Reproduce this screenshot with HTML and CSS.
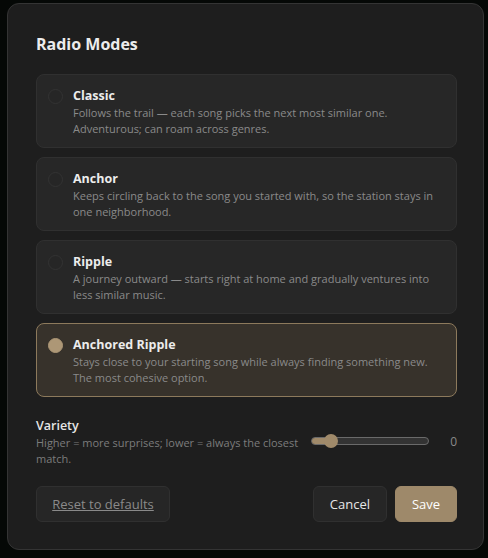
FILE: index.html
```html
<!DOCTYPE html>
<html lang="en">
<head>
  <meta charset="UTF-8" />
  <meta name="viewport" content="width=device-width, initial-scale=1.0"/>
  <title>Radio Modes</title>
  <link rel="stylesheet" href="styles.css">
</head>
<body>

  <div class="modal">
    <h1>Radio Modes</h1>

    <div class="modes">
      <label class="mode">
        <span class="radio"></span>
        <span class="mode-text">
          <strong>Classic</strong>
          <span class="desc">Follows the trail — each song picks the next most similar one. Adventurous; can roam across genres.</span>
        </span>
      </label>
      <label class="mode">
        <span class="radio"></span>
        <span class="mode-text">
          <strong>Anchor</strong>
          <span class="desc">Keeps circling back to the song you started with, so the station stays in one neighborhood.</span>
        </span>
      </label>
      <label class="mode">
        <span class="radio"></span>
        <span class="mode-text">
          <strong>Ripple</strong>
          <span class="desc">A journey outward — starts right at home and gradually ventures into less similar music.</span>
        </span>
      </label>
      <label class="mode selected">
        <span class="radio"></span>
        <span class="mode-text">
          <strong>Anchored Ripple</strong>
          <span class="desc">Stays close to your starting song while always finding something new. The most cohesive option.</span>
        </span>
      </label>
    </div>

    <div class="variety">
      <div class="variety-text">
        <div class="variety-label">Variety</div>
        <div class="desc">Higher = more surprises; lower = always the closest match.</div>
      </div>
      <div class="slider">
        <div class="track"><div class="fill" style="width: 20px"></div></div>
        <div class="thumb" style="left: 13px"></div>
      </div>
      <div class="value">0</div>
    </div>

    <div class="actions">
      <button class="btn reset">Reset to defaults</button>
      <div class="right">
        <button class="btn">Cancel</button>
        <button class="btn primary">Save</button>
      </div>
    </div>
  </div>

</body>
</html>
```

FILE: styles.css
```css
body {
  margin: 0;
  background: #050806;
  font-family: "Open Sans", "Noto Sans", sans-serif;
  color: #e6e6e6;
  height: 558px;
  overflow: hidden;
}
.modal {
  margin: 3px 0 0 7px;
  width: 475px;
  height: 545px;
  background: #1e1e1e;
  border: 1px solid #343434;
  border-radius: 12px;
}
h1 {
  font-size: 16px;
  font-weight: 700;
  color: #ececec;
  margin: 0;
  padding: 29px 0 0 28px;
  line-height: 22px;
}
.modes {
  display: flex;
  flex-direction: column;
  gap: 9px;
  margin: 19px 26px 0 28px;
}
.mode {
  display: flex;
  gap: 10px;
  background: #272727;
  border: 1px solid #303030;
  border-radius: 8px;
  padding: 12px 14px 11px 11px;
  height: 49px;
}
.radio {
  flex: none;
  width: 13px;
  height: 13px;
  margin-top: 2px;
  border-radius: 50%;
  border: 1px solid #333;
  background: #262626;
}
.mode strong {
  display: block;
  font-size: 12.5px;
  line-height: 18px;
  color: #ececec;
}
.desc {
  display: block;
  font-size: 11px;
  line-height: 16px;
  color: #8a8a8a;
}
.mode.selected {
  background: #37322b;
  border-color: #8d7a5c;
}
.mode.selected .radio {
  background: #ad9776;
  border-color: #ad9776;
}
.variety {
  display: flex;
  align-items: center;
  margin: 20px 26px 0 28px;
}
.variety-text {
  width: 265px;
}
.variety-label {
  font-size: 12.5px;
  font-weight: 600;
  line-height: 18px;
  color: #e6e6e6;
}
.variety .desc {
  color: #7c7c7c;
}
.slider {
  position: relative;
  width: 118px;
  height: 14px;
  margin-left: 10px;
  margin-top: -2px;
}
.track {
  position: absolute;
  top: 3px;
  left: 0;
  right: 0;
  height: 6px;
  border: 1px solid #6a6a6a;
  border-radius: 5px;
  background: #333;
  overflow: hidden;
}
.fill {
  height: 100%;
  background: #a08a6a;
}
.thumb {
  position: absolute;
  top: 0;
  width: 14px;
  height: 14px;
  border-radius: 50%;
  background: #a08a6a;
}
.value {
  flex: 1;
  text-align: right;
  font-size: 12px;
  color: #8a8a8a;
  margin-top: -2px;
}
.actions {
  display: flex;
  justify-content: space-between;
  margin: 19px 26px 0 28px;
}
.right {
  display: flex;
  gap: 8px;
}
.btn {
  font-family: inherit;
  font-size: 13px;
  height: 36px;
  padding: 0 16px;
  border-radius: 6px;
  border: 1px solid #303030;
  background: #262626;
  color: #e6e6e6;
  white-space: nowrap;
}
.btn.reset {
  color: #8a8a8a;
  text-decoration: underline;
  width: 134px;
  padding: 0;
}
.btn.primary {
  background: #9e896a;
  border-color: #9e896a;
  color: #fff;
  width: 62px;
  padding: 0;
}
```
